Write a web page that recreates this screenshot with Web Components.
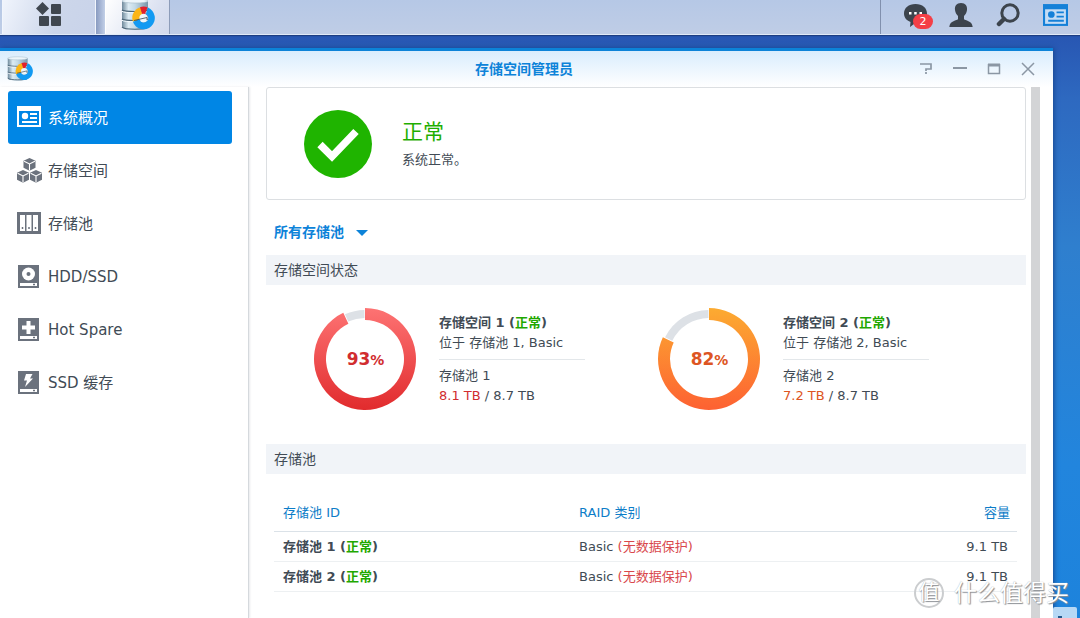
<!DOCTYPE html>
<html lang="zh-CN">
<head>
<meta charset="utf-8">
<title>存储空间管理员</title>
<style>
html,body{margin:0;height:100%}
body{font-family:"DejaVu Sans","Noto Sans CJK SC",sans-serif;font-size:13px;color:#414b55;overflow:hidden}
</style>
</head>
<body>
<dsm-desktop>
  <dsm-taskbar slot="bar"></dsm-taskbar>
  <dsm-window heading="存储空间管理员">
    <dsm-nav slot="nav">
      <dsm-nav-item icon="overview" active>系统概况</dsm-nav-item>
      <dsm-nav-item icon="volume">存储空间</dsm-nav-item>
      <dsm-nav-item icon="pool">存储池</dsm-nav-item>
      <dsm-nav-item icon="hdd">HDD/SSD</dsm-nav-item>
      <dsm-nav-item icon="spare">Hot Spare</dsm-nav-item>
      <dsm-nav-item icon="cache">SSD 缓存</dsm-nav-item>
    </dsm-nav>
    <dsm-health state="正常">系统正常。</dsm-health>
    <dsm-pool-filter></dsm-pool-filter>
    <dsm-section heading="存储空间状态">
      <dsm-volumes>
        <dsm-volume number="1" percent="93" used="8.1 TB" total="8.7 TB" from="#fd7373" to="#e12b2d" ink="#d12d2f"></dsm-volume>
        <dsm-volume number="2" percent="82" used="7.2 TB" total="8.7 TB" from="#fcab31" to="#fd6132" ink="#dd5522"></dsm-volume>
      </dsm-volumes>
    </dsm-section>
    <dsm-section heading="存储池"><dsm-pool-table></dsm-pool-table></dsm-section>
  </dsm-window>
  <dsm-watermark slot="mark"></dsm-watermark>
</dsm-desktop>
<script>
const define=(name,render)=>customElements.define(name,class extends HTMLElement{
  connectedCallback(){
    if(this.shadowRoot)return;
    this.attachShadow({mode:'open'}).innerHTML=render(this);
  }
});

const packageIcon=`<svg viewBox="0 0 34 34" aria-hidden="true"><defs>
<linearGradient id="m"><stop offset="0" stop-color="#6f899b"/><stop offset=".25" stop-color="#dcebf3"/><stop offset=".5" stop-color="#c3dae7"/><stop offset="1" stop-color="#7795a9"/></linearGradient></defs>
<path d="M1 3v26c0 4 26 4 26 0V3z" fill="url(#m)"/>
<path d="M1 12c2 2 24 2 26 0M1 21c2 2 24 2 26 0M1 29c2 3 24 3 26 0" fill="none" stroke="#4c6577" stroke-width="1.2"/>
<path d="M1 13.300c2 2 24 2 26 0M1 22.300c2 2 24 2 26 0" fill="none" stroke="#f2f9fd" stroke-width="1"/>
<ellipse cx="14" cy="3" rx="13" ry="2" fill="#edf6fb" stroke="#a5bac8" stroke-width=".6"/>
<path d="M22.500 20L11.900 23.800A11.300 11.300 0 0 1 19.500 9.200Z" fill="#fcb514"/>
<path d="M22.500 20L19 9.200Q22.500 8 26.500 9.200Z" fill="#e2202c"/>
<path d="M27 9.600A11.300 11.300 0 1 1 11.900 23.800L18.500 21.600A4.500 4.500 0 1 0 25 16.200Z" fill="#129af2"/>
<circle cx="22.500" cy="20" r="4.200" fill="#eef5f9"/><path d="M13 22.500l13-3v2.500" fill="none" stroke="#33424d" stroke-width=".8"/></svg>`;

const card=(c,h)=>`<path d="M0 0h24v21H0z" fill="${c}"/><path d="M2 5h20v14H2z" fill="${h}"/><circle cx="8" cy="10" r="3.200" fill="${c}"/><path d="M13 8h7M13 12h7M5 16h15" stroke="${c}" stroke-width="1.800"/>`;
const drive=inner=>`<path d="M1 1h21v23H1z" fill="#6b727d"/>${inner}<path d="M3 19h17v3H3z" fill="#fff"/><path d="M16 20.500h2" stroke="#6b727d" stroke-width="1.500"/>`;
const cube=(x,y)=>`<g transform="translate(${x} ${y})"><path d="M6 0l6 2.700v7L6 12.700 0 9.700v-7z" fill="#6b727d"/><path d="M.6 3.300L6 6l5.400-2.700M6 6v6.400" fill="none" stroke="#fff" stroke-width="1.100"/></g>`;
const navIcons={
  overview:`<g transform="translate(0 1)">${card('#fff','#0086e5')}</g>`,
  volume:cube(6.500,0)+cube(0,12)+cube(13,12),
  pool:`<path d="M0 1h24v22H0z" fill="#6b727d"/><path d="M3 4h5v16H3zM9.500 4h5v16h-5zM16 4h5v16h-5z" fill="#fff"/><path d="M5.500 16v2M12 16v2M18.500 16v2" stroke="#6b727d" stroke-width="1.500"/>`,
  hdd:drive('<circle cx="11.500" cy="10" r="6.500" fill="#fff"/><circle cx="11.500" cy="10" r="2" fill="#6b727d"/>'),
  spare:drive('<path d="M9.500 4h4v4.500H18v4h-4.500V17h-4v-4.500H5v-4h4.500z" fill="#fff"/>'),
  cache:drive('<path d="M9 4h6.500l-2.500 4.500h3L8 17l2-6.500H7z" fill="#fff"/>')
};

define('dsm-desktop',()=>`<style>
:host{position:relative;display:flex;flex-direction:column;height:100%;overflow:hidden;background:linear-gradient(#2857b3 6%,#2e69c0 16%,#2f7fce 40%,#2285dd 75%,#1d83dc)}
.stage{flex:1;min-height:0;display:flex;padding:13px 27px 0 0}
.corner{position:absolute;right:3px;bottom:0;width:24px;height:11px;background:#b7d8f5;border-radius:2px 2px 0 0}
.corner::after{content:"";position:absolute;left:5px;bottom:0;width:4px;height:2px;background:#24598d}
</style><slot name="bar"></slot><div class="stage"><slot></slot></div><div class="corner"></div><slot name="mark"></slot>`);

define('dsm-taskbar',()=>`<style>
:host{display:block;flex:none}
header{display:flex;height:35px;background:linear-gradient(#b6c8e6,#bfcde6);border-bottom:1px solid #e1eaf7;box-sizing:border-box;box-shadow:0 1px 1px #1d3e83}
button{border:0;background:none;padding:0;display:grid;place-items:center}
svg{display:block}
.menu{width:94px;margin-left:2px;box-sizing:border-box;border:solid #f1f5fc;border-width:0 1px;background:linear-gradient(110deg,#f0f4fc,#ccd6ea 60%,#c9d3ea);padding-bottom:4px}
.gap{width:9px;background:linear-gradient(90deg,#899bc1,#c3d0e8)}
.app{width:65px;box-sizing:border-box;border:solid #fff;border-width:0 1px;background:linear-gradient(120deg,#fff,#dbe1f1 70%,#d2d9ec);border-right-color:#8d9cb9}
.app svg{width:34px;height:34px;margin:-5px 0 0}
.tray{margin-left:auto;display:flex;align-items:center;padding:0 12px 4px 22px;border-left:1px solid #8190ad;gap:23px}
.chat{position:relative;width:25px;margin-right:-2px}
.badge{position:absolute;left:10px;top:11px;width:20px;height:15px;border-radius:8px;background:#f43f46;color:#fff;font:11px/15px "DejaVu Sans",sans-serif;text-align:center}
</style><header>
<button class="menu" aria-label="主菜单"><svg width="26" height="26" viewBox="0 0 26 26" fill="#40474f"><path d="M6.500 0L13 6.500 6.500 13 0 6.500z"/><rect x="15" y="2" width="10" height="10" rx="1"/><rect x="3" y="14" width="10" height="10" rx="1"/><rect x="15" y="14" width="10" height="10" rx="1"/></svg></button>
<span class="gap"></span>
<button class="app" aria-label="存储空间管理员">${packageIcon}</button>
<nav class="tray">
<button class="chat" aria-label="通知"><svg width="25" height="25" viewBox="0 0 25 25"><path d="M12.500 1C5.500 1 1 5 1 10.500c0 4 2.500 7 6.500 8.500l-.5 5 6-4.500C20 19.500 24 16 24 10.500S19.500 1 12.500 1z" fill="#3c444d"/><path d="M6 9h2.500v2.500H6zM11.200 9h2.500v2.500h-2.500zM16.500 9H19v2.500h-2.500z" fill="#fff"/></svg><span class="badge">2</span></button>
<button aria-label="用户"><svg width="24" height="24" viewBox="0 0 24 24"><path d="M12 0c-4.500 0-6.500 3-6 7 .3 2.500 1.500 4.500 3 6v3C8 18 1 17 .3 24h23.400C23 17 16 18 15 16v-3c1.500-1.500 2.700-3.500 3-6C18.500 3 16.500 0 12 0z" fill="#3c444d"/></svg></button>
<button aria-label="搜索"><svg width="24" height="24" viewBox="0 0 24 24" fill="none" stroke="#3c444d"><circle cx="14" cy="10" r="8.200" stroke-width="3"/><path d="M8 16L3 21" stroke-width="4.500" stroke-linecap="round"/></svg></button>
<button aria-label="小工具"><svg width="25" height="22" viewBox="0 0 24 21">${card('#1480d8','#c4dcf5')}</svg></button>
</nav></header>`);

define('dsm-window',el=>`<style>
:host{flex:1;min-width:0;display:flex;flex-direction:column;background:#fff;border-top:3px solid #0c83d8;box-shadow:1px 0 5px #17468f}
.bar{display:grid;grid-template-columns:1fr auto 1fr;align-items:center;height:36px;padding:0 12px 0 7px;background:linear-gradient(#d9edfd,#fff);flex:none}
.bar>svg{width:26px;height:26px}
h1{margin:0;font-size:14px;line-height:20px;font-weight:bold;color:#0d83d9}
.tools{display:flex;justify-content:flex-end;gap:18px;margin-right:5px}
button{border:0;background:none;padding:0;width:16px;height:16px}
button svg{display:block;fill:none;stroke:#8b97a4;stroke-width:2}
.body{flex:1;min-height:0;display:flex}
main{flex:1;min-width:0;padding-left:17px}
.track{width:9px;margin:0 13px 0 5px;background:#d3d4d6}
</style>
<div class="bar">${packageIcon}<h1>${el.getAttribute('heading')}</h1><div class="tools">
<button aria-label="帮助"><svg width="16" height="16"><path d="M2 3h11v5H8V10M8 11v2" stroke-width="1.700"/></svg></button>
<button aria-label="最小化"><svg width="16" height="16"><path d="M1 7h14"/></svg></button>
<button aria-label="最大化"><svg width="16" height="16"><path d="M2.500 3v9.500h11V3" stroke-width="1.500"/><path d="M2 4h12" stroke-width="3"/></svg></button>
<button aria-label="关闭"><svg width="16" height="16"><path d="M2 2l12 12M14 2L2 14" stroke-width="1.500"/></svg></button></div></div>
<div class="body"><slot name="nav"></slot><main><slot></slot></main><div class="track"></div></div>`);

define('dsm-nav',()=>`<style>
:host{display:block;flex:none;width:249px;box-sizing:border-box;padding:4px 16px 0 8px;border-right:1px solid #d5d9dd;box-shadow:1px 0 2px #e8eaec}
</style><nav><slot></slot></nav>`);

define('dsm-nav-item',el=>`<style>
:host{display:block}
a{display:flex;align-items:center;gap:7px;height:53px;padding-left:9px;border-radius:3px;color:#414b55;font-size:15px;line-height:22px;text-decoration:none}
:host([active]) a{background:#0086e5;color:#fff}
svg{display:block;width:24px;height:25px;flex:none;overflow:visible}
</style><a href="#${el.getAttribute('icon')}"><svg viewBox="0 0 24 25" aria-hidden="true">${navIcons[el.getAttribute('icon')]}</svg><span><slot></slot></span></a>`);

define('dsm-health',el=>`<style>
:host{display:flex;align-items:center;gap:30px;height:113px;box-sizing:border-box;padding:0 37px;border:1px solid #dcdfe2;border-radius:3px}
svg{display:block;flex:none}
h2{margin:0;font-size:21px;line-height:32px;font-weight:normal;color:#1fae00}
p{margin:0;line-height:24px}
</style><svg width="68" height="68" viewBox="0 0 68 68" aria-hidden="true"><circle cx="34" cy="34" r="34" fill="#1fb400"/><path d="M16 34.500l12 12L52 21.500" fill="none" stroke="#fff" stroke-width="7.500"/></svg>
<div><h2>${el.getAttribute('state')}</h2><p><slot></slot></p></div>`);

define('dsm-pool-filter',()=>`<style>
:host{display:block;padding:22px 8px 12px}
label{display:inline-grid;align-items:center;vertical-align:top}
select,svg{grid-area:1/1}
select{appearance:none;border:0;background:none;margin:0;padding:0 24px 0 0;height:21px;font:bold 14px/21px "DejaVu Sans","Noto Sans CJK SC",sans-serif;color:#0d83d9}
svg{justify-self:end;pointer-events:none}
</style><label><select aria-label="存储池"><option>所有存储池</option></select><svg width="12" height="6"><path d="M0 0h12L6 6z" fill="#0d83d9"/></svg></label>`);

define('dsm-section',el=>`<style>
:host{display:block}
h3{margin:0;padding:0 8px;font-size:14px;line-height:30px;font-weight:normal;background:#f1f4f8}
</style><section><h3>${el.getAttribute('heading')}</h3><slot></slot></section>`);

define('dsm-volumes',()=>`<style>
:host{display:flex;padding:22px 24px 33px 48px}
::slotted(*){flex:1}
</style><slot></slot>`);

const polar=(r,p)=>{const a=p/50*Math.PI;return `${52+r*Math.sin(a)} ${52-r*Math.cos(a)}`};
const ring=(a,b,r,s)=>{const big=b-a>50?1:0;return `M${polar(r,a)}A${r} ${r} 0 ${big} 1 ${polar(r,b)}L${polar(s,b)}A${s} ${s} 0 ${big} 0 ${polar(s,a)}Z`};
define('dsm-volume',el=>{
  const g=n=>el.getAttribute(n),p=+g('percent');
  return `<style>
:host{display:flex;align-items:center;gap:22px;--ink:${g('ink')}}
.dial{display:grid;place-items:center;flex:none}
.dial>*{grid-area:1/1}
b.p{font-size:17px;line-height:20px;color:var(--ink)}
b.p small{font-size:14px}
svg{display:block;margin-left:-1px}
.info{width:146px;line-height:20px;white-space:nowrap}
p{margin:0}
hr{border:0;border-top:1px solid #e3e7ea;margin:6px 0}
em{font-style:normal;color:#1fa800}
.used{color:var(--ink)}
</style><div class="dial"><svg width="104" height="104" viewBox="0 0 104 104" aria-hidden="true"><defs><linearGradient id="g" x2="0" y2="1"><stop stop-color="${g('from')}"/><stop offset="1" stop-color="${g('to')}"/></linearGradient></defs>
<path d="${ring(p+.3,99.800,49,41)}" fill="#dde1e6"/><path d="${ring(0,p,51,39)}" fill="url(#g)"/></svg><b class="p">${p}<small>%</small></b></div>
<div class="info"><p><b>存储空间 ${g('number')} (<em>正常</em>)</b></p><p>位于 存储池 ${g('number')}, Basic</p><hr><p>存储池 ${g('number')}</p><p><span class="used">${g('used')}</span> / ${g('total')}</p></div>`});

define('dsm-pool-table',()=>`<style>
:host{display:block;padding:21px 9px 0 8px}
table{width:100%;border-collapse:collapse;table-layout:fixed}
th,td{text-align:left;padding:0 9px;height:29px;line-height:20px;border-bottom:1px solid #edf0f2;font-weight:normal}
thead th{height:36px;color:#0d7dc8;border-bottom:1px solid #dbe2e8}
th:first-child{width:278px}
th:last-child,td:last-child{text-align:right;width:120px}
thead th:last-child{padding-right:7px}
tbody th{font-weight:bold}
em{font-style:normal;color:#1fa800}
td span{color:#d9484c}
</style><table><thead><tr><th scope="col">存储池 ID</th><th scope="col">RAID 类别</th><th scope="col">容量</th></tr></thead>
<tbody>${[1,2].map(n=>`<tr><th scope="row">存储池 ${n} (<em>正常</em>)</th><td>Basic <span>(无数据保护)</span></td><td>9.1 TB</td></tr>`).join('')}</tbody></table>`);

define('dsm-watermark',()=>`<style>
:host{position:absolute;right:11px;bottom:10px;display:flex;align-items:center;gap:10px;color:#fff;font-size:23px;line-height:30px;text-shadow:1px 1px 1px #8b8f94,0 0 1px #a5a8ac;pointer-events:none}
i{font-style:normal;width:26px;height:26px;border:2px solid #cbcdcf;border-radius:50%;font-size:21px;line-height:25px;text-align:center}
</style><i>值</i><span>什么值得买</span>`);
</script>
</body>
</html>
